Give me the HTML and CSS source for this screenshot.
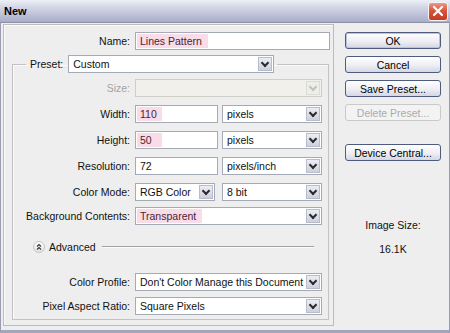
FILE: index.html
```html
<!DOCTYPE html>
<html lang="en">
<head>
  <meta charset="UTF-8">
  <meta name="viewport" content="width=device-width, initial-scale=1.0">
  <title>New</title>
  <link rel="stylesheet" href="styles.css">
</head>
<body>

<div class="window">
  <div class="titlebar">
    <span class="title">New</span>
    <span class="close">
      <svg width="18" height="17" viewBox="0 0 18 17"><path d="M5 4 L13 12 M13 4 L5 12" stroke="#fff" stroke-width="2.2" stroke-linecap="round"/></svg>
    </span>
  </div>

  <div class="frame">
    <div class="panel">
      <div class="row name-row">
        <label class="lbl">Name:</label>
        <div class="field name-field"><span class="mark">Lines Pattern</span></div>
      </div>

      <fieldset class="preset">
        <legend>
          <span class="lbl-legend">Preset:</span>
          <div class="select preset-select"><span>Custom</span><i class="arrow"></i></div>
        </legend>

        <div class="row">
          <label class="lbl off">Size:</label>
          <div class="select full off"><span></span><i class="arrow"></i></div>
        </div>
        <div class="row">
          <label class="lbl">Width:</label>
          <div class="field num-field"><span class="mark num">110</span></div>
          <div class="select unit"><span>pixels</span><i class="arrow"></i></div>
        </div>
        <div class="row">
          <label class="lbl">Height:</label>
          <div class="field num-field"><span class="mark num">50</span></div>
          <div class="select unit"><span>pixels</span><i class="arrow"></i></div>
        </div>
        <div class="row">
          <label class="lbl">Resolution:</label>
          <div class="field num-field"><span class="plain">72</span></div>
          <div class="select unit"><span>pixels/inch</span><i class="arrow"></i></div>
        </div>
        <div class="row">
          <label class="lbl">Color Mode:</label>
          <div class="select mode"><span>RGB Color</span><i class="arrow"></i></div>
          <div class="select bits"><span>8 bit</span><i class="arrow"></i></div>
        </div>
        <div class="row bg-row">
          <label class="lbl">Background Contents:</label>
          <div class="select full"><span><b class="mark">Transparent</b></span><i class="arrow"></i></div>
        </div>

        <div class="advanced">
          <span class="toggle">
            <svg width="10" height="10" viewBox="0 0 10 10"><path d="M3 4.5 L5 2.5 L7 4.5 M3 7.5 L5 5.5 L7 7.5" fill="none" stroke="#333" stroke-width="1.1"/></svg>
          </span>
          <span>Advanced</span>
          <span class="rule"></span>
        </div>

        <div class="row profile-row">
          <label class="lbl">Color Profile:</label>
          <div class="select full"><span>Don't Color Manage this Document</span><i class="arrow"></i></div>
        </div>
        <div class="row">
          <label class="lbl">Pixel Aspect Ratio:</label>
          <div class="select full"><span>Square Pixels</span><i class="arrow"></i></div>
        </div>
      </fieldset>
    </div>

    <div class="side">
      <button class="btn default">OK</button>
      <button class="btn">Cancel</button>
      <button class="btn">Save Preset...</button>
      <button class="btn" disabled>Delete Preset...</button>
      <button class="btn central">Device Central...</button>
      <div class="size-label">Image Size:</div>
      <div class="size-value">16.1K</div>
    </div>
  </div>
</div>

</body>
</html>
```

FILE: styles.css
```css
body {
  margin: 0;
  background: #eeeeee;
  font-family: 'Liberation Sans', Arial, sans-serif;
  font-size: 10.5px;
  color: #111;
}

.window {
  width: 450px;
  height: 333px;
  display: flex;
  flex-direction: column;
}

.titlebar {
  height: 22px;
  box-sizing: border-box;
  display: flex;
  align-items: center;
  justify-content: space-between;
  padding: 0 2px 0 4px;
  background: linear-gradient(to bottom, #eef0f7 0%, #d6d8e8 30%, #bfc2d8 65%, #a9adc8 100%);
}

.title {
  font-size: 11px;
  font-weight: bold;
  color: #000;
}

.close {
  width: 20px;
  height: 19px;
  box-sizing: border-box;
  border: 1px solid #f4f4f4;
  border-radius: 3px;
  background: linear-gradient(to bottom, #ec9a86, #d9553a 45%, #c33a21);
  display: flex;
  align-items: center;
  justify-content: center;
}

.frame {
  flex: 1;
  display: flex;
  border-top: 1px solid #8c8fa6;
  border-left: 1px solid #9a9cb2;
  border-right: 1px solid #9a9cb2;
  border-bottom: 3px solid #a3a5bb;
  background: #eeeeee;
}

.panel {
  width: 331px;
  height: 302px;
  box-sizing: border-box;
  margin: 1px 0 0 2px;
  padding-top: 7px;
  border: 1px solid #bcbcbc;
  box-shadow: inset 1px 1px 0 #fafafa;
}

.row {
  display: flex;
  align-items: center;
  height: 18px;
}

.lbl {
  text-align: right;
  width: 117px;
  margin-right: 5px;
  white-space: nowrap;
}

.name-row .lbl { width: 126px; }

.off { color: #a4a4a4; }

.field,
.select {
  height: 18px;
  box-sizing: border-box;
  border: 1px solid #a4abb6;
  background: #fff;
  display: flex;
  align-items: center;
  padding: 1px;
  white-space: nowrap;
}

.name-field { width: 195px; }
.num-field { width: 83px; margin-right: 4px; }

.mark {
  display: inline-block;
  height: 14px;
  line-height: 14px;
  padding: 0 6px 0 3px;
  background: #f8dce8;
  color: #4a2436;
  font-weight: normal;
}

.mark.num { width: 25px; box-sizing: border-box; }

.plain { padding-left: 3px; }

.select span {
  flex: 1;
  padding-left: 3px;
  overflow: hidden;
}

.select b.mark { margin-left: -3px; }

.arrow {
  width: 14px;
  height: 14px;
  box-sizing: border-box;
  border: 1px solid #b9bccb;
  background: linear-gradient(to bottom, #eceef4, #cdd0dd);
  display: flex;
  align-items: center;
  justify-content: center;
}

.arrow::after {
  content: '';
  width: 4px;
  height: 4px;
  margin-top: -3px;
  border-right: 2px solid #2a2a2a;
  border-bottom: 2px solid #2a2a2a;
  transform: rotate(45deg);
}

.select.off {
  background: #f1f0ea;
  border-color: #cfcec6;
}

.select.off .arrow {
  background: #eeeee8;
  border-color: #dcdcd6;
}

.select.off .arrow::after { border-color: #c0c0c0; }

.full { width: 187px; }
.unit { width: 100px; }
.mode { width: 80px; margin-right: 7px; }
.bits { width: 100px; }

.preset {
  margin: 5px 0 0 8px;
  width: 317px;
  box-sizing: border-box;
  min-width: 0;
  padding: 6px 0 4px 0;
  border: 1px solid #c2c2c2;
  box-shadow: inset 1px 1px 0 #fafafa;
}

.preset .row + .row { margin-top: 8px; }
.preset .row.bg-row { margin-top: 6px; }

legend {
  margin-left: 13px;
  padding: 0 3px 0 4px;
  display: flex;
  align-items: center;
  height: 18px;
}

.lbl-legend { margin-right: 5px; }

.preset-select { width: 206px; }

.advanced {
  display: flex;
  align-items: center;
  height: 18px;
  margin: 13px 14px 0 20px;
}

.toggle {
  width: 10px;
  height: 10px;
  border-radius: 50%;
  border: 1px solid #c4c4c4;
  background: linear-gradient(to bottom, #ffffff, #e2e2e2);
  display: flex;
  align-items: center;
  justify-content: center;
  margin-right: 4px;
}

.rule {
  flex: 1;
  margin-left: 6px;
  border-top: 1px solid #a2a2a2;
  border-bottom: 1px solid #fbfbfb;
}

.preset .row.profile-row { margin-top: 17px; }
.preset .profile-row + .row { margin-top: 6px; }

.side {
  display: flex;
  flex-direction: column;
  padding: 9px 0 0 11px;
}

.btn {
  width: 96px;
  height: 17px;
  padding: 0;
  margin-bottom: 7px;
  border: 1px solid #4e5b7e;
  border-radius: 3px;
  background: linear-gradient(to bottom, #ffffff, #eeeef3 55%, #d4d6e3);
  font-family: inherit;
  font-size: 10.5px;
  color: #000;
}

.btn.default { box-shadow: inset 0 0 0 1px #b8c3e2; }

.btn:disabled {
  border-color: #c9c9c9;
  background: #f3f3f3;
  color: #ababab;
}

.btn.central { margin-top: 16px; }

.size-label,
.size-value {
  width: 96px;
  text-align: center;
  line-height: 13px;
}

.size-label { margin-top: 51px; }
.size-value { margin-top: 11px; }
```
